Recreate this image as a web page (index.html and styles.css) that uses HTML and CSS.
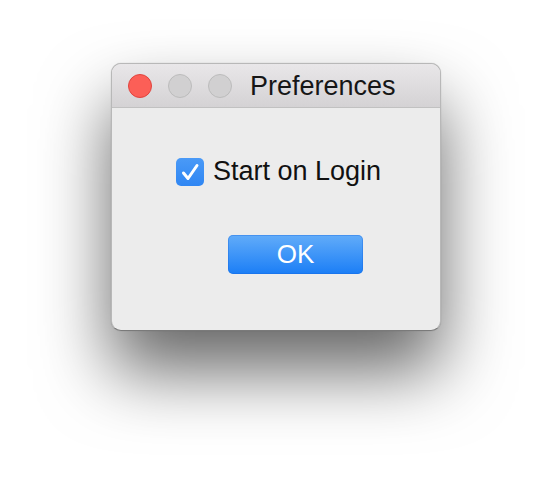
FILE: index.html
```html
<!DOCTYPE html>
<html lang="en">
<head>
  <meta charset="UTF-8">
  <title>Preferences</title>
  <link rel="stylesheet" href="styles.css">
</head>
<body>
  <!-- Preferences Window -->
  <div class="window">
    <div class="titlebar">
      <div class="lights">
        <span class="light close"></span>
        <span class="light"></span>
        <span class="light"></span>
      </div>
      <div class="title">Preferences</div>
    </div>

    <div class="content">
      <label class="check-row">
        <span class="checkbox">
          <svg viewBox="0 0 28 28" width="28" height="28">
            <path d="M7.5 15 L12 20.5 L21 7.5" fill="none" stroke="#fff" stroke-width="3" stroke-linecap="round" stroke-linejoin="round"/>
          </svg>
        </span>
        <span class="check-label">Start on Login</span>
      </label>

      <button class="ok-btn">OK</button>
    </div>
  </div>
</body>
</html>
```

FILE: styles.css
```css
/* General Styles */
html {
  height: 100%;
}

body {
  margin: 0;
  min-height: 100%;
  box-sizing: border-box;
  padding-top: 63px;
  background: #ffffff;
  font-family: 'Liberation Sans', Arial, sans-serif;
  color: #111111;
  display: flex;
  flex-direction: column;
  align-items: center;
}

/* Window */
.window {
  width: 330px;
  height: 268px;
  box-sizing: border-box;
  background: #ececec;
  border: 1px solid #b8b8b8;
  border-bottom-color: #7a7a7a;
  border-radius: 10px;
  overflow: hidden;
  box-shadow: 0 40px 70px rgba(0, 0, 0, 0.6), 0 0 1px rgba(0, 0, 0, 0.3);
}

.titlebar {
  height: 44px;
  box-sizing: border-box;
  display: flex;
  align-items: center;
  padding-left: 16px;
  background: linear-gradient(#e9e7e9, #d4d2d4);
  border-bottom: 1px solid #c1c1c1;
}

.lights {
  display: flex;
  gap: 16px;
}

.light {
  width: 24px;
  height: 24px;
  box-sizing: border-box;
  border-radius: 50%;
  background: #d1d0d1;
  border: 1px solid #bcbcbc;
}

.light.close {
  background: #fc5f57;
  border-color: #e0443e;
}

.title {
  margin-left: 18px;
  font-size: 27px;
  color: #161616;
  margin-top: 1px;
}

/* Content */
.content {
  display: flex;
  flex-direction: column;
  align-items: flex-start;
}

.check-row {
  display: flex;
  align-items: center;
  margin-top: 48px;
  margin-left: 64px;
}

.checkbox {
  width: 28px;
  height: 28px;
  border-radius: 5px;
  background: linear-gradient(#4a9af7, #2f86f3);
  display: flex;
}

.check-label {
  margin-left: 9px;
  font-size: 27px;
}

.ok-btn {
  margin-top: 48px;
  margin-left: 116px;
  width: 135px;
  height: 39px;
  border: none;
  border-radius: 5px;
  background: linear-gradient(#62acf9, #1b7ef6);
  box-shadow: inset 0 0 0 1px rgba(20, 100, 220, 0.35);
  color: #ffffff;
  font-family: 'Liberation Sans', Arial, sans-serif;
  font-size: 26px;
  padding: 0;
}
```
